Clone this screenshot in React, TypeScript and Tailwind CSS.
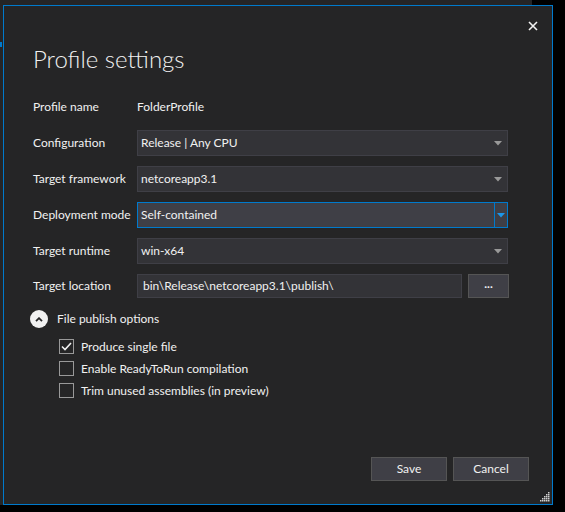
import React from "react";

const font = { fontFamily: '"Segoe UI", Lato, "Noto Sans", sans-serif' };

function Arrow({ blue }: { blue?: boolean }) {
  return (
    <svg width="8" height="5" viewBox="0 0 8 5" className="shrink-0">
      <path d="M0 0h8L4 4.5z" fill={blue ? "#1c97ea" : "#999999"} />
    </svg>
  );
}

function Combo({ value, focused }: { value: string; focused?: boolean }) {
  if (focused) {
    return (
      <div className="flex h-[26px] w-[371px] border border-[#007acc] bg-[#3f3f46]">
        <div className="flex flex-1 items-center pl-[3px] text-[#f1f1f1]">{value}</div>
        <div className="flex w-[13px] items-center justify-center border-l border-[#007acc]">
          <Arrow blue />
        </div>
      </div>
    );
  }
  return (
    <div className="flex h-[26px] w-[371px] items-center justify-between border border-[#3f3f46] bg-[#333337] pl-[3px] pr-[5px]">
      <span className="text-[#f1f1f1]">{value}</span>
      <Arrow />
    </div>
  );
}

function Row({ label, children }: { label: string; children: React.ReactNode }) {
  return (
    <div className="flex h-[26px] items-center">
      <div className="w-[104px] shrink-0 whitespace-nowrap text-[#f1f1f1]">{label}</div>
      {children}
    </div>
  );
}

function Check({ label, checked }: { label: string; checked?: boolean }) {
  return (
    <div className="flex h-[15px] items-center gap-[7px]">
      <div className="flex h-[15px] w-[15px] items-center justify-center border border-[#999999]">
        {checked && (
          <svg width="11" height="9" viewBox="0 0 11 9">
            <path d="M1 4.5l3 3L10 1" stroke="#f1f1f1" strokeWidth="1.6" fill="none" />
          </svg>
        )}
      </div>
      <span className="whitespace-nowrap text-[#f1f1f1]">{label}</span>
    </div>
  );
}

export default function App() {
  return (
    <div className="relative h-[512px] w-[565px] overflow-hidden bg-black text-[12px]" style={font}>
      {/* window behind the dialog */}
      <div className="absolute left-0 top-0 h-[505px] w-[532px] bg-[#252526]">
        <div className="absolute left-0 top-[42px] h-[5px] w-[2px] bg-[#007acc]" />
      </div>

      <div className="absolute left-[3px] top-[5px] flex h-[500px] w-[550px] flex-col border border-[#007acc] bg-[#252526]">
        <button className="absolute right-[14px] top-[14px] flex h-[11px] w-[11px] items-center justify-center">
          <svg width="10" height="10" viewBox="0 0 10 10">
            <path d="M1 1l8 8M9 1L1 9" stroke="#f1f1f1" strokeWidth="1.6" />
          </svg>
        </button>

        <div className="pl-[29px] pt-[38px] text-[24px] font-light leading-[30px] text-[#f1f1f1]">Profile settings</div>

        <div className="mt-[20px] flex flex-col gap-[10px] pl-[29px]">
          <div className="flex h-[26px] items-center">
            <div className="w-[104px] text-[#f1f1f1]">Profile name</div>
            <span className="text-[#f1f1f1]">FolderProfile</span>
          </div>
          <Row label="Configuration">
            <Combo value="Release | Any CPU" />
          </Row>
          <Row label="Target framework">
            <Combo value="netcoreapp3.1" />
          </Row>
          <Row label="Deployment mode">
            <Combo value="Self-contained" focused />
          </Row>
          <Row label="Target runtime">
            <Combo value="win-x64" />
          </Row>
          <div className="flex h-[24px] items-center">
            <div className="w-[104px] shrink-0 text-[#f1f1f1]">Target location</div>
            <div className="flex h-[24px] w-[325px] items-center border border-[#3f3f46] bg-[#333337] pl-[5px] text-[#f1f1f1]">
              bin\Release\netcoreapp3.1\publish\
            </div>
            <button className="ml-[6px] flex h-[24px] w-[41px] items-center justify-center border border-[#555555] bg-[#3f3f46] pb-[4px] font-bold text-[#f1f1f1]">
              ...
            </button>
          </div>
        </div>

        <div className="mt-[12px] flex items-center gap-[9px] pl-[26px]">
          <div className="flex h-[18px] w-[18px] items-center justify-center rounded-full bg-[#f1f1f1]">
            <svg width="8" height="5" viewBox="0 0 8 5">
              <path d="M1 4.2L4 1.2l3 3" stroke="#252526" strokeWidth="1.8" fill="none" />
            </svg>
          </div>
          <span className="text-[#f1f1f1]">File publish options</span>
        </div>

        <div className="mt-[11px] flex flex-col gap-[7px] pl-[55px]">
          <Check label="Produce single file" checked />
          <Check label="Enable ReadyToRun compilation" />
          <Check label="Trim unused assemblies (in preview)" />
        </div>

        <div className="mt-auto mb-[23px] flex justify-end gap-[6px] pr-[23px]">
          <button className="h-[24px] w-[76px] border border-[#555555] bg-[#3f3f46] text-[#f1f1f1]">Save</button>
          <button className="h-[24px] w-[76px] border border-[#555555] bg-[#3f3f46] text-[#f1f1f1]">Cancel</button>
        </div>

        <svg className="absolute bottom-[2px] right-[2px]" width="10" height="10" viewBox="0 0 10 10">
          {[
            [8, 0], [6, 2], [8, 2], [4, 4], [6, 4], [8, 4], [2, 6], [4, 6], [6, 6], [8, 6], [0, 8], [2, 8], [4, 8], [6, 8], [8, 8],
          ].map(([x, y], i) => (
            <rect key={i} x={x} y={y} width="1.5" height="1.5" fill="#d0d0d0" />
          ))}
        </svg>
      </div>
    </div>
  );
}
